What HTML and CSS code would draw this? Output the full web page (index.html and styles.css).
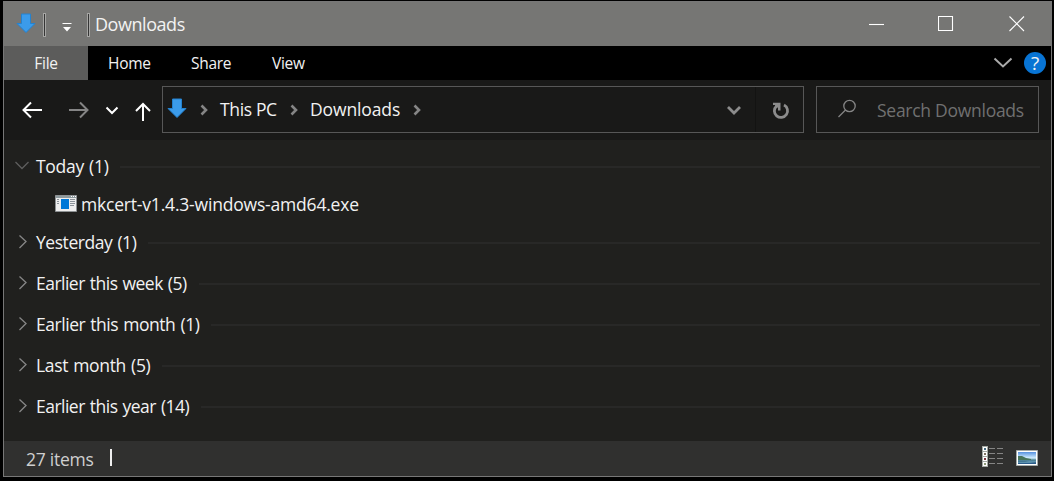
FILE: index.html
```html
<!DOCTYPE html>
<html lang="en">
<head>
<meta charset="utf-8">
<title>Downloads</title>
<link rel="stylesheet" href="styles.css">
</head>
<body>
<svg class="defs" width="0" height="0">
  <symbol id="down-arrow" viewBox="0 0 20 21"><path d="M5.5 1h9v9.500h4.500L10 19.500 1 10.500h4.500z" fill="#3b9bea" stroke="#2482cf"/></symbol>
  <symbol id="crumb" viewBox="0 0 8 12"><path d="M1.500 1.500 6 6l-4.500 4.500" fill="none" stroke="#858585" stroke-width="2.600"/></symbol>
  <symbol id="right" viewBox="0 0 10 16"><path d="M1.500 1.500 8 7.500 1.500 14" fill="none" stroke="#868686" stroke-width="1.300"/></symbol>
</svg>
<main class="window">
  <header class="titlebar">
    <svg class="app-icon" width="20" height="21"><use href="#down-arrow"/></svg>
    <i class="divider"></i>
    <svg class="quick" width="10" height="9" viewBox="0 0 10 9"><path d="M.5 0h9v1h-9zM1 4h8L5 8.500z" fill="#fff"/></svg>
    <i class="divider"></i>
    <h1 class="title">Downloads</h1>
    <div class="controls">
      <svg width="16" height="16" viewBox="0 0 16 16"><path d="M0 8.500h15"/></svg>
      <svg width="16" height="16" viewBox="0 0 16 16"><path d="M.5.500h14v14H.5z"/></svg>
      <svg width="16" height="16" viewBox="0 0 16 16"><path d="m.5.500 14.500 14.500M15 .5.500 15"/></svg>
    </div>
  </header>
  <nav class="tabs">
    <span class="tab file">File</span><span class="tab home">Home</span><span class="tab share">Share</span><span class="tab view">View</span>
    <svg class="expand" width="20" height="12" viewBox="0 0 20 12"><path d="m1.500 1.500 8.500 8 8.500-8" fill="none" stroke="#aaa" stroke-width="2"/></svg>
    <span class="help">?</span>
  </nav>
  <section class="navbar">
    <svg class="arrow back" width="21" height="18" viewBox="0 0 21 18"><path d="M20 9H2M9 1.500 1.500 9 9 16.500"/></svg>
    <svg class="arrow forward" width="21" height="18" viewBox="0 0 21 18"><path d="M1 9h18M12 1.500 19.500 9 12 16.500"/></svg>
    <svg class="arrow recent" width="14" height="9" viewBox="0 0 14 9"><path d="m1.500 1.500 5.500 5.500 5.500-5.500"/></svg>
    <svg class="arrow up" width="17" height="20" viewBox="0 0 17 20"><path d="M8 19V2M1 9l7-7 7 7"/></svg>
    <div class="address">
      <svg class="place" width="20" height="21"><use href="#down-arrow"/></svg>
      <svg class="crumb" width="8" height="12"><use href="#crumb"/></svg>
      <span class="pc">This PC</span>
      <svg class="crumb" width="8" height="12"><use href="#crumb"/></svg>
      <span class="folder">Downloads</span>
      <svg class="crumb" width="8" height="12"><use href="#crumb"/></svg>
      <svg class="history" width="16" height="11" viewBox="0 0 16 11"><path d="m2 2 6 6 6-6" fill="none" stroke="#8c8c8c" stroke-width="2.800"/></svg>
      <span class="refresh"><svg width="18" height="18" viewBox="0 0 18 18"><path d="M12 3A6.600 6.600 0 1 1 4.500 4" fill="none" stroke="#8c8c8c" stroke-width="2.800"/><path d="M1 .8h7.500v7.700H6V5.300L4 6.500 3 3H1z" fill="#8c8c8c"/></svg></span>
    </div>
    <div class="search">
      <svg width="20" height="20" viewBox="0 0 20 20"><circle cx="12.500" cy="7" r="5.700"/><path d="M8.500 11 1.500 18"/></svg>
      <span>Search Downloads</span>
    </div>
  </section>
  <section class="content">
    <div class="group open"><svg width="14" height="9" viewBox="0 0 14 9"><path d="m.5 1 6.500 6.500L13.500 1" fill="none" stroke="#5e5e5e" stroke-width="1.300"/></svg><span class="today">Today (1)</span></div>
    <div class="item">
      <svg width="22" height="17" viewBox="0 0 22 17"><path d="M.5.500h21v16H.5z" fill="#eee" stroke="#8e9294"/><path d="M1 1h20v2H1z" fill="#8e9a9e"/><path d="M16 1.500h1m1 0h1m1 0h1" stroke="#fff"/><path d="M6 4h8v10H6z" fill="#0078d7"/><path d="M2 4.500h2M2 6.500h2M2 8.500h2M15 4.500h5M15 6.500h5M15 8.500h5M15 10.500h4" stroke="#8b9299"/></svg>
      <span class="filename">mkcert-v1.4.3-windows-amd64.exe</span>
    </div>
    <div class="group"><svg width="10" height="16"><use href="#right"/></svg><span class="yesterday">Yesterday (1)</span></div>
    <div class="group"><svg width="10" height="16"><use href="#right"/></svg><span class="week">Earlier this week (5)</span></div>
    <div class="group"><svg width="10" height="16"><use href="#right"/></svg><span class="month">Earlier this month (1)</span></div>
    <div class="group"><svg width="10" height="16"><use href="#right"/></svg><span class="last">Last month (5)</span></div>
    <div class="group"><svg width="10" height="16"><use href="#right"/></svg><span class="year">Earlier this year (14)</span></div>
  </section>
  <footer class="status">
    <span class="count">27 items</span><i class="caret"></i>
    <svg class="details" width="21" height="21" viewBox="0 0 21 21"><path d="M0 0h6v21H0z" fill="#a5aaa5"/><path d="M1 1h4v4H1zm0 5h4v4H1zm0 5h4v4H1zm0 5h4v4H1z" fill="#fff"/><path d="M2 2h2v2H2z" fill="#466b82"/><path d="M2 7h2v2H2z" fill="#807463"/><path d="M2 12h2v2H2z" fill="#793640"/><path d="M2 17h2v2H2z" fill="#8d9b79"/><path d="M7 2.500h6m2 0h6M7 7.500h6m2 0h6M7 12.500h6m2 0h6M7 17.500h6m2 0h6" stroke="#858585"/></svg>
    <svg class="large" width="22" height="16" viewBox="0 0 22 16"><defs><linearGradient id="sky" x2="0" y2="1"><stop stop-color="#5591df"/><stop offset=".5" stop-color="#d3efff"/><stop offset=".65" stop-color="#568b9a"/><stop offset="1" stop-color="#245487"/></linearGradient></defs><path d="M.5.500h21v15H.5z" fill="#fff" stroke="#a4aaa8"/><path d="M2 2h18v12H2z" fill="url(#sky)"/><path d="M2 6l4 0 4 2 5 1v1H2z" fill="#47745b"/><path d="M2 12h7l4-1h7v1l-6 1H2z" fill="#5c91ad"/></svg>
  </footer>
</main>
</body>
</html>
```
FILE: styles.css
```css
* { box-sizing: border-box; }
body { margin: 0; width: 1054px; height: 481px; padding: 1px 2px 4px 3px; overflow: hidden; background: #000; color: #f2f2f2; font: 17.5px "Open Sans", "Noto Sans", sans-serif; }
.defs { display: none; }
.window { height: 476px; border: 1px solid #777; background: #20201e; display: flex; flex-direction: column; }
svg { display: block; flex: none; }
span, h1 { white-space: nowrap; }
.titlebar { height: 44px; background: #767674; display: flex; align-items: center; }
.app-icon { margin: 0 7px 2px 12px; }
.divider { width: 3px; height: 24px; border: 1px solid #a6a6a4; background: #353535; margin-top: 2px; }
.quick { margin: 6px 15px 0 16px; }
.title { margin: 0 0 0 5px; font-size: 18px; font-weight: 400; letter-spacing: -.45px; }
.controls { display: flex; gap: 54px; margin: 0 26px 0 auto; }
.controls svg { fill: none; stroke: #fff; stroke-width: 1.100; }
.controls svg:nth-child(2) { margin-right: 1px; }
.controls svg:first-child { margin-right: -1px; }
.tabs { height: 34px; background: #000; display: flex; align-items: center; font-size: 15.5px; letter-spacing: -.3px; }
.tab { line-height: 34px; }
.file { width: 84px; text-align: center; background: #5c5c5b; }
.home { margin-left: 20px; width: 83px; }
.share { width: 81px; }
.expand { margin-left: auto; }
.help { width: 22px; height: 22px; margin: 0 5px 0 11px; border-radius: 50%; background: #0874d4; text-align: center; font-size: 19px; line-height: 22px; }
.navbar { height: 60px; background: #191918; display: flex; align-items: center; padding: 0 12px 0 18px; }
.arrow { fill: none; stroke: #fff; stroke-width: 2; }
.back { margin-right: 25px; }
.forward { stroke: #858585; margin-right: 16px; }
.recent { margin-right: 16px; }
.up { margin-top: 3px; }
.address { width: 642px; flex: none; height: 47px; margin: 0 12px 2px 10px; border: 1px solid #575757; display: flex; align-items: center; }
.place { margin: 0 13px 1px 4px; }
.crumb { margin-top: 1px; }
.pc { width: 57px; margin: 0 13px 0 12px; letter-spacing: -.35px; }
.folder { width: 90px; margin: 0 13px 0 12px; letter-spacing: -.12px; }
.history { margin: 2px 0 0 auto; }
.refresh { width: 48px; height: 45px; margin-left: 13px; border-left: 1px solid #131312; padding: 15px 0 0 16px; }
.search { width: 223px; height: 47px; margin-bottom: 2px; border: 1px solid #575757; display: flex; align-items: center; padding-left: 20px; gap: 20px; color: #707070; letter-spacing: -.27px; }
.search span { margin-top: 2px; }
.search svg { fill: none; stroke: #858585; stroke-width: 1.300; }
.content { height: 301px; padding: 6px 11px 0 0; }
.group { height: 41px; padding-left: 14px; display: flex; align-items: center; gap: 8px; word-spacing: 1px; }
.group svg, .group span { margin-bottom: 2px; }
.group::after { content: ""; height: 2px; flex: 1; background: #282827; margin-left: 4px; }
.open { padding-left: 11px; gap: 7px; }
.today { letter-spacing: -.3px; }
.yesterday { letter-spacing: -.45px; }
.week { letter-spacing: -.52px; }
.month { letter-spacing: -.46px; }
.last { letter-spacing: -.35px; }
.year { letter-spacing: -.52px; }
.item { height: 35px; padding-left: 51px; display: flex; align-items: center; gap: 4px; }
.item svg, .item span { margin-bottom: 2px; }
.filename { letter-spacing: -.19px; }
.status { height: 35px; background: #30302f; display: flex; align-items: center; padding: 0 13px 0 22px; color: #cfcfcf; }
.count { letter-spacing: -.25px; }
.caret { width: 2px; height: 17px; background: #eee; margin: 0 0 2px 16px; }
.details { margin: 0 13px 4px auto; }
.large { margin-bottom: 1px; }
```
